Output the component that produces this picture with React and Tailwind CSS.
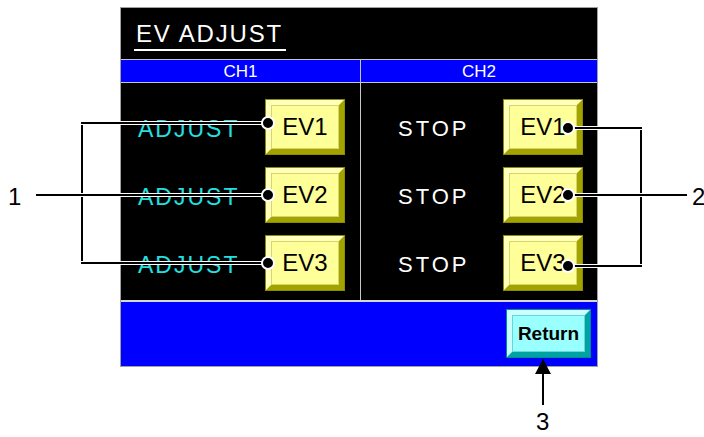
import React from 'react';

// channel rows
const rows = ['EV1', 'EV2', 'EV3'];

function EvButton({ label }) {
  return (
    <div className="w-[80px] h-[56px] border border-[#8c8c00] flex">
      <div className="flex-1 flex border-[5px] border-t-[#ffffbb] border-l-[#ffffbb] border-b-[#a3a300] border-r-[#a3a300]">
        <div className="flex-1 flex items-center justify-center bg-[#ffff99] border border-[#d6d66b] text-[24px] leading-none text-black">
          {label}
        </div>
      </div>
    </div>
  );
}

function ReturnButton() {
  return (
    <div className="w-[85px] h-[49px] border border-[#008c8c] flex">
      <div className="flex-1 flex border-[5px] border-t-[#ccffff] border-l-[#ccffff] border-b-[#00a3a3] border-r-[#00a3a3]">
        <div className="flex-1 flex items-center justify-center bg-[#99ffff] border border-[#66d6d6] text-[19px] font-bold leading-none text-black">
          Return
        </div>
      </div>
    </div>
  );
}

// callout lines drawn over the screen
function Callouts() {
  const line = (x1, y1, x2, y2) => (
    <g key={`${x1}-${y1}-${x2}-${y2}`}>
      <line x1={x1} y1={y1} x2={x2} y2={y2} stroke="#fff" strokeWidth="4" />
      <line x1={x1} y1={y1} x2={x2} y2={y2} stroke="#000" strokeWidth="2" />
    </g>
  );
  const dot = (cx, cy) => (
    <circle key={`d-${cx}-${cy}`} cx={cx} cy={cy} r="6" fill="#000" stroke="#fff" strokeWidth="2" />
  );
  return (
    <svg className="absolute left-0 top-0 pointer-events-none" width="704" height="437" viewBox="0 0 704 437">
      {line(82, 122, 82, 264)}
      {line(81, 123, 268, 123)}
      {line(36, 195, 268, 195)}
      {line(81, 263, 268, 263)}
      {dot(268, 123)}
      {dot(268, 195)}
      {dot(268, 263)}
      {line(641, 127, 641, 267)}
      {line(568, 128, 642, 128)}
      {line(568, 195, 687, 195)}
      {line(568, 266, 642, 266)}
      {dot(568, 128)}
      {dot(568, 195)}
      {dot(568, 266)}
      <line x1="543" y1="372" x2="543" y2="405" stroke="#000" strokeWidth="2" />
      <polygon points="543,359 535,374 551,374" fill="#000" />
    </svg>
  );
}

export default function App() {
  return (
    <div className="relative w-[704px] h-[437px] bg-white overflow-hidden font-['Liberation_Sans',Arial,sans-serif]">
      <div className="pl-[120px] pt-[7px]">
        <div className="w-[478px] h-[360px] border border-[#a0a0a0] bg-black flex flex-col">
          {/* title */}
          <div className="h-[51px] pt-[14px]">
            <div className="ml-[13px] w-[152px] border-b-2 border-white pl-[2px] pb-[3px] text-[24px] leading-none tracking-[1.8px] text-white">
              EV ADJUST
            </div>
          </div>

          {/* channel header */}
          <div className="h-[24px] flex bg-[#0000ff] border-y border-[#c8c8c8] text-[17px] leading-none text-white">
            <div className="w-[239px] flex items-center justify-center">CH1</div>
            <div className="w-px bg-[#c8c8c8]" />
            <div className="flex-1 flex items-center justify-center">CH2</div>
          </div>

          {/* channels */}
          <div className="h-[217px] flex">
            <div className="w-[239px] pt-[16px] pl-[17px] pr-[15px] flex flex-col gap-[12px]">
              {rows.map((r) => (
                <div key={r} className="h-[56px] flex items-center justify-between">
                  <span className="text-[23px] leading-none tracking-[2px] text-[#22e0e0] pt-[4px]">ADJUST</span>
                  <EvButton label={r} />
                </div>
              ))}
            </div>
            <div className="w-px bg-[#c8c8c8]" />
            <div className="flex-1 pt-[16px] pl-[37px] pr-[14px] flex flex-col gap-[12px]">
              {rows.map((r) => (
                <div key={r} className="h-[56px] flex items-center justify-between">
                  <span className="text-[22px] leading-none tracking-[3px] text-white pt-[3px]">STOP</span>
                  <EvButton label={r} />
                </div>
              ))}
            </div>
          </div>

          <div className="h-[2px] bg-[#d8d8d8]" />

          {/* footer */}
          <div className="flex-1 bg-[#0000ff] flex justify-end items-start pt-[7px] pr-[6px]">
            <ReturnButton />
          </div>
        </div>
      </div>

      <Callouts />

      <div className="absolute left-[8px] top-[185px] text-[24px] leading-none text-black">1</div>
      <div className="absolute left-[692px] top-[185px] text-[24px] leading-none text-black">2</div>
      <div className="absolute left-[536px] top-[410px] text-[24px] leading-none text-black">3</div>
    </div>
  );
}
